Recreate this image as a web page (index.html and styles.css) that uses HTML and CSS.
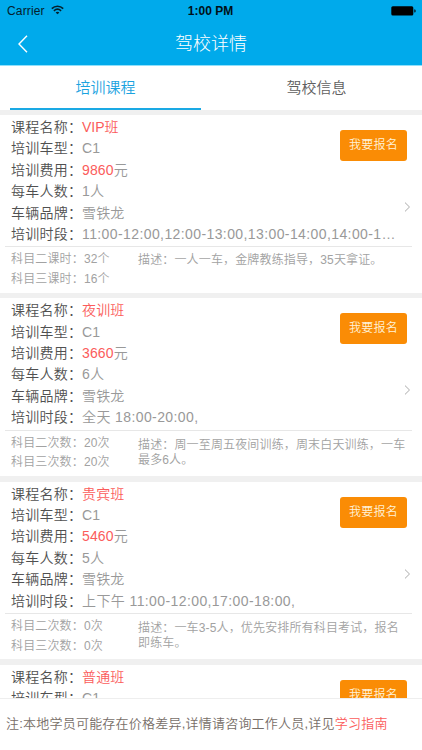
FILE: index.html
```html
<!DOCTYPE html>
<html lang="zh-CN">
<head>
<meta charset="utf-8">
<title>驾校详情</title>
<link rel="stylesheet" href="styles.css">
</head>
<body>
<div class="app">
  <header class="header">
    <div class="status">
      <div class="carrier"><span>Carrier</span>
        <svg class="wifi" width="13" height="10" viewBox="0 0 13 10" fill="none" stroke="#04202c" stroke-width="1.6"><path d="M.8 3.6C4 .4 9 .4 12.200 3.600M2.900 5.800C5 3.900 8 3.900 10.100 5.800"/><path d="M6.500 9.300L4.600 7.500C5.700 6.600 7.300 6.600 8.400 7.500Z" fill="#04202c" stroke="none"/></svg>
      </div>
      <div class="clock">1:00 PM</div>
      <svg class="battery" width="25" height="10" viewBox="0 0 25 10"><rect x=".3" y=".2" width="22" height="9.400" rx="1.500" fill="#000"/><path d="M23.200 3.200Q24.800 3.400 24.800 4.900T23.200 6.600Z" fill="#04202c"/></svg>
    </div>
    <div class="nav">
      <svg class="back" width="10" height="18" viewBox="0 0 10 18" fill="none" stroke="#fff" stroke-width="1.400"><path d="M9 .8L1 9L9 17.200"/></svg>
      <h1>驾校详情</h1>
    </div>
  </header>
  <nav class="tabs"><div class="tab active">培训课程</div><div class="tab">驾校信息</div></nav>
  <main class="list">
    <article class="card">
      <div class="top">
        <dl>
          <dt>课程名称：</dt><dd class="red vip">VIP班</dd>
          <dt>培训车型：</dt><dd>C1</dd>
          <dt>培训费用：</dt><dd><span class="red">9860</span>元</dd>
          <dt>每车人数：</dt><dd>1人</dd>
          <dt>车辆品牌：</dt><dd>雪铁龙</dd>
          <dt>培训时段：</dt><dd class="time">11:00-12:00,12:00-13:00,13:00-14:00,14:00-1…</dd>
        </dl>
        <button class="btn">我要报名</button>
        <svg class="arrow" width="7" height="10" viewBox="0 0 7 10" fill="none" stroke="#aaa"><path d="M1 .6L5.500 5L1 9.400"/></svg>
      </div>
      <div class="bottom"><div class="stats"><div>科目二课时：<span>32个</span></div><div>科目三课时：<span>16个</span></div></div><p class="desc">描述：一人一车，金牌教练指导，35天拿证。</p></div>
    </article>
    <article class="card">
      <div class="top">
        <dl>
          <dt>课程名称：</dt><dd class="red">夜训班</dd>
          <dt>培训车型：</dt><dd>C1</dd>
          <dt>培训费用：</dt><dd><span class="red">3660</span>元</dd>
          <dt>每车人数：</dt><dd>6人</dd>
          <dt>车辆品牌：</dt><dd>雪铁龙</dd>
          <dt>培训时段：</dt><dd class="time">全天 18:00-20:00,</dd>
        </dl>
        <button class="btn">我要报名</button>
        <svg class="arrow" width="7" height="10" viewBox="0 0 7 10" fill="none" stroke="#aaa"><path d="M1 .6L5.500 5L1 9.400"/></svg>
      </div>
      <div class="bottom"><div class="stats"><div>科目二次数：<span>20次</span></div><div>科目三次数：<span>20次</span></div></div><p class="desc two">描述：周一至周五夜间训练，周末白天训练，一车<br>最多6人。</p></div>
    </article>
    <article class="card">
      <div class="top">
        <dl>
          <dt>课程名称：</dt><dd class="red">贵宾班</dd>
          <dt>培训车型：</dt><dd>C1</dd>
          <dt>培训费用：</dt><dd><span class="red">5460</span>元</dd>
          <dt>每车人数：</dt><dd>5人</dd>
          <dt>车辆品牌：</dt><dd>雪铁龙</dd>
          <dt>培训时段：</dt><dd class="time">上下午 11:00-12:00,17:00-18:00,</dd>
        </dl>
        <button class="btn">我要报名</button>
        <svg class="arrow" width="7" height="10" viewBox="0 0 7 10" fill="none" stroke="#aaa"><path d="M1 .6L5.500 5L1 9.400"/></svg>
      </div>
      <div class="bottom"><div class="stats"><div>科目二次数：<span>0次</span></div><div>科目三次数：<span>0次</span></div></div><p class="desc two">描述：一车3-5人，优先安排所有科目考试，报名<br>即练车。</p></div>
    </article>
    <article class="card">
      <div class="top">
        <dl>
          <dt>课程名称：</dt><dd class="red">普通班</dd>
          <dt>培训车型：</dt><dd>C1</dd>
        </dl>
        <button class="btn">我要报名</button>
      </div>
    </article>
  </main>
  <footer class="note">注:本地学员可能存在价格差异,详情请咨询工作人员,详见<span class="red">学习指南</span></footer>
</div>
</body>
</html>
```
FILE: styles.css
```css
* { box-sizing: border-box; }
body, h1, dl, dd, p { margin: 0; }
body { font-family: "Liberation Sans", "Noto Sans CJK SC", sans-serif; font-weight: 350; background: #fff; }
.app { width: 422px; height: 750px; display: flex; flex-direction: column; overflow: hidden; }
.header { height: 66px; flex: none; background: #00aaeb; border-bottom: 1px solid #8fe0fb; }
.status { height: 22px; padding: 0 6px 0 7px; display: grid; grid-template-columns: 1fr auto 1fr; align-items: center; color: #04202c; font-size: 12px; line-height: 22px; }
.carrier { display: flex; align-items: center; gap: 6px; letter-spacing: .15px; }
.wifi { margin-bottom: 2px; }
.clock { font-weight: 700; margin-right: 2px; color: #001018; }
.battery { justify-self: end; }
.nav { height: 43px; display: grid; grid-template-columns: 40px 1fr 40px; align-items: center; }
.back { margin-left: 18px; }
.nav h1 { color: #fff; font-size: 18px; font-weight: 300; text-align: center; line-height: 43px; padding-top: 1px; }
.tabs { height: 44px; flex: none; display: flex; padding: 0 10px; }
.tab { width: 191px; margin-right: 20px; border-bottom: 2px solid transparent; text-align: center; font-size: 15px; line-height: 44px; color: #606060; flex: none; }
.tab + .tab { margin-right: 0; }
.active { color: #1ba3df; border-color: #1aa9e4; }
.list { height: 588px; flex: none; overflow: hidden; background: #f0f0f0; padding-top: 5px; }
.card { height: 177.800px; margin-bottom: 5.500px; background: #fff; padding-top: 2px; }
.top { position: relative; }
.top dl { padding-left: 11px; display: grid; grid-template-columns: 71px 1fr; grid-auto-rows: 21.400px; line-height: 21px; font-size: 14px; }
dt { color: #505050; letter-spacing: .25px; white-space: nowrap; }
dd { color: #999; white-space: nowrap; letter-spacing: .15px; }
.vip { letter-spacing: 0; }
.time { letter-spacing: .4px; }
.red { color: #fb5c5b; }
.btn { position: absolute; left: 340px; top: 13px; width: 67px; height: 31px; padding: 0 0 1px; border: 0; border-radius: 3px; background: #fa8c05; color: #fff2d8; font: inherit; font-size: 12px; line-height: 30px; letter-spacing: .2px; white-space: nowrap; }
.arrow { position: absolute; left: 404px; top: 85px; }
.bottom { margin: 1px 10px 0 5px; padding: 3px 0 0 6px; border-top: 1px solid #e7e7e7; display: grid; grid-template-columns: 127px 1fr; font-size: 12px; color: #a2a2a2; }
.stats { line-height: 19.700px; letter-spacing: .15px; }
.desc { line-height: 15px; padding-top: 2.500px; white-space: nowrap; letter-spacing: .15px; }
.desc.two { padding-top: 4px; }
.note { height: 52px; flex: none; border-top: 1px solid #eee; padding-left: 6px; font-size: 13px; line-height: 50px; color: #776e68; white-space: nowrap; letter-spacing: .22px; }
```
